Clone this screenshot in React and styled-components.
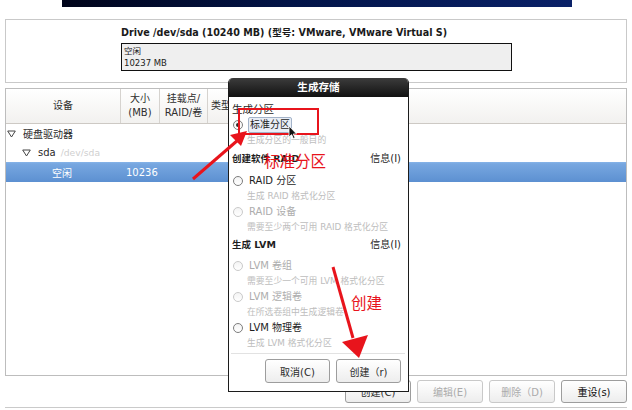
import React from 'react'
import styled, {createGlobalStyle} from 'styled-components'

const GlobalStyle = createGlobalStyle`
  html, body { margin: 0; padding: 0; background: #fff; }
  body {
    width: 632px;
    height: 410px;
    overflow: hidden;
    font-family: "DejaVu Sans", "Noto Sans CJK SC", sans-serif;
    color: #2a2a2a;
  }
`

const TriangleDown = () => (
    <svg width="9" height="8" viewBox="0 0 9 8">
        <path d="M0.7 1 L8.3 1 L4.5 7 Z" fill="none" stroke="#444" strokeWidth="1" strokeLinejoin="round"/>
    </svg>
)

function Option({label, desc, checked, disabled, focused}) {
    return (
        <div>
            <RadioLine>
                <Radio $disabled={disabled}>{checked ? <Dot/> : null}</Radio>
                <OptLabel $disabled={disabled} $focused={focused}>{label}</OptLabel>
            </RadioLine>
            <Desc>{desc}</Desc>
        </div>
    )
}

export default function App() {
    return (
        <Page>
            <GlobalStyle/>
            <Banner/>
            <DriveBox>
                <DriveTitle>Drive /dev/sda (10240 MB) (型号: VMware, VMware Virtual S)</DriveTitle>
                <DiskBar>
                    <span>空闲</span>
                    <span>10237 MB</span>
                </DiskBar>
            </DriveBox>

            <TableBox>
                <HeadRow>
                    <HeadCell $center>设备</HeadCell>
                    <HeadCell $center $sep>大小<br/>(MB)</HeadCell>
                    <HeadCell $center $sep>挂载点/<br/>RAID/卷</HeadCell>
                    <HeadCell $sep>类型</HeadCell>
                </HeadRow>
                <Row>
                    <TreeCell $indent={1}><TriangleDown/><span>硬盘驱动器</span></TreeCell>
                </Row>
                <Row>
                    <TreeCell $indent={16}><TriangleDown/><span>sda</span><Path>/dev/sda</Path></TreeCell>
                </Row>
                <Row $selected>
                    <TreeCell $indent={46}>空闲</TreeCell>
                    <SizeCell>10236</SizeCell>
                </Row>
            </TableBox>

            <ButtonRow>
                <Button>创建(C)</Button>
                <Button $disabled>编辑(E)</Button>
                <Button $disabled>删除（D)</Button>
                <Button $strong>重设(s)</Button>
            </ButtonRow>
            <BottomLine/>

            <Dialog>
                <TitleBar>生成存储</TitleBar>
                <DialogBody>
                    <SectionHead $after={0}><span>生成分区</span></SectionHead>
                    <Option label="标准分区" desc="生成分区的一般目的" checked focused/>
                    <SectionHead $before={3} $after={6} $bold><span>创建软件 RAID</span><Info>信息(I)</Info></SectionHead>
                    <Option label="RAID 分区" desc="生成 RAID 格式化分区"/>
                    <Option label="RAID 设备" desc="需要至少两个可用 RAID 格式化分区" disabled/>
                    <SectionHead $before={2} $after={5} $bold><span>生成 LVM</span><Info>信息(I)</Info></SectionHead>
                    <Option label="LVM 卷组" desc="需要至少一个可用 LVM 格式化分区" disabled/>
                    <Option label="LVM 逻辑卷" desc="在所选卷组中生成逻辑卷" disabled/>
                    <Option label="LVM 物理卷" desc="生成 LVM 格式化分区"/>
                    <Separator/>
                    <DialogButtons>
                        <Button $small>取消(C)</Button>
                        <Button $small>创建（r)</Button>
                    </DialogButtons>
                </DialogBody>
            </Dialog>

            <Annotations width="632" height="410" viewBox="0 0 632 410">
                <rect x="239" y="109" width="79" height="25" fill="none" stroke="#e8141c" strokeWidth="2"/>
                <line x1="193" y1="179" x2="238" y2="140" stroke="#e8141c" strokeWidth="3"/>
                <polygon points="247,131 241,146 230,135" fill="#e8141c"/>
                <line x1="333" y1="267" x2="353" y2="338" stroke="#e8141c" strokeWidth="3"/>
                <polygon points="359,358 342,342 368,335" fill="#e8141c"/>
                <path d="M289 126 L289 137 L291.6 134.6 L293.4 138.6 L295 137.8 L293.2 134 L296.6 134 Z" fill="#111" stroke="#fff" strokeWidth="0.8"/>
            </Annotations>
            <RedNote $x={264} $y={150}>标准分区</RedNote>
            <RedNote $x={351} $y={292}>创建</RedNote>
        </Page>
    )
}

//---------------------------STYLES-------------------------------------------//

const Page = styled.div`
        position: relative;
        width: 632px;
        height: 410px;
        overflow: hidden;
`
const Banner = styled.div`
        margin-left: 62px;
        width: 510px;
        height: 7px;
        background: linear-gradient(90deg, #00041a 0%, #021448 45%, #0a2168 100%);
`
const DriveBox = styled.div`
        box-sizing: border-box;
        margin: 12px 5px 0;
        height: 64px;
        border: 1px solid #c9c9c9;
        padding: 6px 0 0 115px;
`
const DriveTitle = styled.div`
        font-size: 9.6px;
        font-weight: bold;
        line-height: 14px;
        color: #1a1a1a;
        white-space: nowrap;
`
const DiskBar = styled.div`
        box-sizing: border-box;
        margin-top: 3px;
        width: 391px;
        height: 28px;
        border: 1px solid #111;
        background: #efefef;
        padding: 0 2px;
        display: flex;
        flex-direction: column;
        justify-content: center;
        font-size: 8.5px;
        line-height: 12px;
        color: #222;
`
const TableBox = styled.div`
        box-sizing: border-box;
        margin: 5px 5px 0;
        height: 288px;
        border: 1px solid #bdbdbd;
`
const HeadRow = styled.div`
        display: grid;
        grid-template-columns: 114px 39px 48px 1fr;
        height: 34px;
        border-bottom: 1px solid #cdc9c4;
        background: linear-gradient(#ffffff, #f2f1ef);
`
const HeadCell = styled.div`
        display: flex;
        align-items: center;
        justify-content: ${p => p.$center ? 'center' : 'flex-start'};
        text-align: center;
        padding-left: ${p => p.$center ? 0 : 3}px;
        border-left: ${p => p.$sep ? '1px solid #d6d3cf' : 'none'};
        font-size: 10px;
        line-height: 14px;
        color: #2e2e2e;
        white-space: nowrap;
`
const Row = styled.div`
        display: grid;
        grid-template-columns: 115px 1fr;
        align-items: center;
        height: ${p => p.$selected ? 20 : 19}px;
        font-size: 10px;
        color: ${p => p.$selected ? '#fff' : '#2a2a2a'};
        background: ${p => p.$selected ? 'linear-gradient(#86b4e8 0%, #77a7e0 10%, #5c90d1 100%)' : 'transparent'};
`
const TreeCell = styled.div`
        display: flex;
        align-items: center;
        gap: 7px;
        padding-left: ${p => p.$indent}px;
        white-space: nowrap;
`
const Path = styled.span`
        margin-left: -2px;
        font-size: 9.2px;
        color: #cfcfcf;
`
const SizeCell = styled.div`
        padding-left: 5px;
`
const ButtonRow = styled.div`
        display: flex;
        justify-content: flex-end;
        gap: 6px;
        margin-top: 4px;
        padding-right: 5px;
`
const Button = styled.div`
        box-sizing: border-box;
        width: ${p => p.$small ? 65 : 66}px;
        height: ${p => p.$small ? 24 : 23}px;
        display: flex;
        align-items: center;
        justify-content: center;
        border: 1px solid ${p => p.$disabled ? '#c9c9c9' : '#9d9d9d'};
        border-radius: 3px;
        background: linear-gradient(#ffffff, #ededed);
        font-size: 10px;
        color: ${p => p.$disabled ? '#ababab' : p.$strong ? '#111' : '#2a2a2a'};
        white-space: nowrap;
`
const BottomLine = styled.div`
        margin: 4px 5px 0;
        border-top: 1px solid #cacaca;
`
const Dialog = styled.div`
        position: absolute;
        left: 228px;
        top: 78px;
        box-sizing: border-box;
        width: 181px;
        height: 314px;
        border: 1px solid #1c1c1c;
        border-top: none;
        border-radius: 5px 5px 0 0;
        background: #fff;
        overflow: hidden;
`
const TitleBar = styled.div`
        height: 19px;
        background: linear-gradient(#3c3c3c, #111);
        color: #fff;
        font-size: 10.6px;
        font-weight: bold;
        line-height: 19px;
        text-align: center;
`
const DialogBody = styled.div`
        padding: 4px 7px 0 3px;
`
const SectionHead = styled.div`
        display: flex;
        justify-content: space-between;
        height: 16px;
        line-height: 16px;
        margin-top: ${p => p.$before || 0}px;
        margin-bottom: ${p => p.$after || 0}px;
        font-size: ${p => p.$bold ? 9.5 : 10.5}px;
        font-weight: ${p => p.$bold ? 'bold' : 'normal'};
        color: #1e1e1e;
        white-space: nowrap;
`
const Info = styled.span`
        font-weight: normal;
        font-size: 10px;
`
const RadioLine = styled.div`
        display: flex;
        align-items: center;
        height: 16px;
        padding-left: 1px;
`
const Radio = styled.span`
        box-sizing: border-box;
        width: 10px;
        height: 10px;
        border-radius: 50%;
        border: 1px solid ${p => p.$disabled ? '#cacaca' : '#7d7d7d'};
        background: linear-gradient(#f4f4f4, #fff);
        display: flex;
        align-items: center;
        justify-content: center;
`
const Dot = styled.span`
        width: 4px;
        height: 4px;
        border-radius: 50%;
        background: #2b2b2b;
`
const OptLabel = styled.span`
        box-sizing: border-box;
        margin-left: ${p => p.$focused ? 5 : 6}px;
        padding: 0 ${p => p.$focused ? 1 : 0}px;
        height: ${p => p.$focused ? 16 : 'auto'};
        line-height: ${p => p.$focused ? 14 : 16}px;
        border: ${p => p.$focused ? '1px solid #a3b3c9' : 'none'};
        border-radius: 2px;
        background: ${p => p.$focused ? '#e9eef6' : 'transparent'};
        font-size: 10px;
        color: ${p => p.$disabled ? '#adadad' : '#1e1e1e'};
        white-space: nowrap;
`
const Desc = styled.div`
        height: 15px;
        line-height: 15px;
        padding-left: 15px;
        font-size: 8.8px;
        color: #bdbdbd;
        white-space: nowrap;
`
const Separator = styled.div`
        margin: 2px -4px 0 -1px;
        border-top: 1px solid #e2e2e2;
`
const DialogButtons = styled.div`
        display: flex;
        justify-content: flex-end;
        gap: 6px;
        margin-top: 5px;
`
const Annotations = styled.svg`
        position: absolute;
        left: 0;
        top: 0;
        pointer-events: none;
`
const RedNote = styled.div`
        position: absolute;
        left: ${p => p.$x}px;
        top: ${p => p.$y}px;
        font-family: "Noto Sans CJK SC", sans-serif;
        font-size: 15.5px;
        line-height: 20px;
        color: #e8141c;
        white-space: nowrap;
`
